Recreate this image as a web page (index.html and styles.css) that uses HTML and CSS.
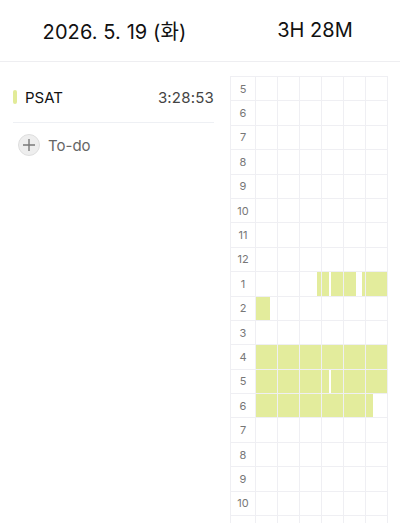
FILE: index.html
```html
<!DOCTYPE html>
<html lang="ko">
<head>
<meta charset="utf-8">
<link rel="stylesheet" href="styles.css">
</head>
<body>
<header class="top">
  <div class="top-date">2026. 5. 19 (화)</div>
  <div class="top-total">3H 28M</div>
</header>
<main class="body">
  <section class="todo">
    <div class="subject">
      <span class="subject-bar"></span>
      <span class="subject-name">PSAT</span>
      <span class="subject-time">3:28:53</span>
    </div>
    <div class="add">
      <span class="add-btn">
        <svg width="14" height="14" viewBox="0 0 14 14"><path d="M7 1V13M1 7H13" stroke="#7a7a7a" stroke-width="1.4" fill="none"/></svg>
      </span>
      <span class="add-label">To-do</span>
    </div>
  </section>
  <section class="timetable">
    <div class="grid">
      <div class="row"><div class="hour">5</div><div class="track"><div class="cells"><i></i><i></i><i></i><i></i><i></i><i></i></div></div></div>
      <div class="row"><div class="hour">6</div><div class="track"><div class="cells"><i></i><i></i><i></i><i></i><i></i><i></i></div></div></div>
      <div class="row"><div class="hour">7</div><div class="track"><div class="cells"><i></i><i></i><i></i><i></i><i></i><i></i></div></div></div>
      <div class="row"><div class="hour">8</div><div class="track"><div class="cells"><i></i><i></i><i></i><i></i><i></i><i></i></div></div></div>
      <div class="row"><div class="hour">9</div><div class="track"><div class="cells"><i></i><i></i><i></i><i></i><i></i><i></i></div></div></div>
      <div class="row"><div class="hour">10</div><div class="track"><div class="cells"><i></i><i></i><i></i><i></i><i></i><i></i></div></div></div>
      <div class="row"><div class="hour">11</div><div class="track"><div class="cells"><i></i><i></i><i></i><i></i><i></i><i></i></div></div></div>
      <div class="row"><div class="hour">12</div><div class="track"><div class="cells"><i></i><i></i><i></i><i></i><i></i><i></i></div></div></div>
      <div class="row"><div class="hour">1</div><div class="track">
        <span class="seg" style="left:46.2%;width:9.2%"></span>
        <span class="seg" style="left:56.8%;width:19%"></span>
        <span class="seg" style="left:80.3%;width:19.7%"></span>
        <div class="cells"><i></i><i></i><i></i><i></i><i></i><i></i></div></div></div>
      <div class="row"><div class="hour">2</div><div class="track">
        <span class="seg" style="left:0;width:10.6%"></span>
        <div class="cells"><i></i><i></i><i></i><i></i><i></i><i></i></div></div></div>
      <div class="row"><div class="hour">3</div><div class="track"><div class="cells"><i></i><i></i><i></i><i></i><i></i><i></i></div></div></div>
      <div class="row"><div class="hour">4</div><div class="track">
        <span class="seg" style="left:0;width:100%"></span>
        <div class="cells"><i></i><i></i><i></i><i></i><i></i><i></i></div></div></div>
      <div class="row"><div class="hour">5</div><div class="track">
        <span class="seg" style="left:0;width:55%"></span>
        <span class="seg" style="left:56.6%;width:43.4%"></span>
        <div class="cells"><i></i><i></i><i></i><i></i><i></i><i></i></div></div></div>
      <div class="row"><div class="hour">6</div><div class="track">
        <span class="seg" style="left:0;width:88.6%"></span>
        <div class="cells"><i></i><i></i><i></i><i></i><i></i><i></i></div></div></div>
      <div class="row"><div class="hour">7</div><div class="track"><div class="cells"><i></i><i></i><i></i><i></i><i></i><i></i></div></div></div>
      <div class="row"><div class="hour">8</div><div class="track"><div class="cells"><i></i><i></i><i></i><i></i><i></i><i></i></div></div></div>
      <div class="row"><div class="hour">9</div><div class="track"><div class="cells"><i></i><i></i><i></i><i></i><i></i><i></i></div></div></div>
      <div class="row"><div class="hour">10</div><div class="track"><div class="cells"><i></i><i></i><i></i><i></i><i></i><i></i></div></div></div>
      <div class="row"><div class="hour"></div><div class="track"><div class="cells"><i></i><i></i><i></i><i></i><i></i><i></i></div></div></div>
    </div>
  </section>
</main>
</body>
</html>
```
FILE: styles.css
```css
* { box-sizing: border-box; }
html, body {
  margin: 0;
  padding: 0;
  background: #ffffff;
  width: 400px;
  height: 523px;
  overflow: hidden;
  font-family: Inter, "Noto Sans", "Noto Sans CJK KR", sans-serif;
  color: #111;
}
.top {
  display: flex;
  height: 62px;
  border-bottom: 1px solid #eeeef1;
  align-items: center;
  padding-bottom: 1px;
}
.top-date {
  width: 229px;
  text-align: center;
  font-size: 20px;
  letter-spacing: 0.1px;
}
.top-total {
  flex: 1;
  text-align: center;
  font-size: 20px;
  padding-left: 1px;
}
.body {
  display: flex;
  align-items: flex-start;
  height: 461px;
  overflow: hidden;
}
.todo {
  width: 230px;
  padding: 0 16px 0 13px;
}
.subject {
  display: flex;
  align-items: center;
  height: 61px;
  padding-top: 10px;
  border-bottom: 1px solid #eef0f4;
}
.subject-bar {
  width: 4px;
  height: 14px;
  border-radius: 2px;
  background: #e2eb98;
  margin-right: 8px;
}
.subject-name {
  flex: 1;
  font-size: 15px;
  font-weight: 400;
  color: #111;
}
.subject-time {
  font-size: 15px;
  color: #444;
  letter-spacing: 0.2px;
}
.add {
  display: flex;
  align-items: center;
  height: 44px;
  padding-left: 5px;
}
.add-btn {
  width: 22px;
  height: 22px;
  border-radius: 50%;
  background: #eeeeee;
  border: 1px solid #dedede;
  display: flex;
  align-items: center;
  justify-content: center;
  margin-right: 8px;
}
.add-label {
  font-size: 15px;
  color: #666;
}
.timetable {
  padding-top: 14px;
}
.grid {
  width: 158px;
  border-top: 1px solid #efeff3;
  border-left: 1px solid #efeff3;
}
.row {
  display: flex;
  height: 24.4px;
}
.hour {
  width: 25px;
  border-right: 1px solid #efeff3;
  border-bottom: 1px solid #efeff3;
  font-size: 11px;
  color: #777;
  display: flex;
  align-items: center;
  justify-content: center;
}
.track {
  position: relative;
  width: 132px;
}
.seg {
  position: absolute;
  top: 0;
  bottom: 1px;
  background: #e3ec9c;
}
.cells {
  position: relative;
  display: flex;
  height: 100%;
}
.cells i {
  width: 22px;
  height: 100%;
  border-right: 1px solid #efeff3;
  border-bottom: 1px solid #efeff3;
}
```
